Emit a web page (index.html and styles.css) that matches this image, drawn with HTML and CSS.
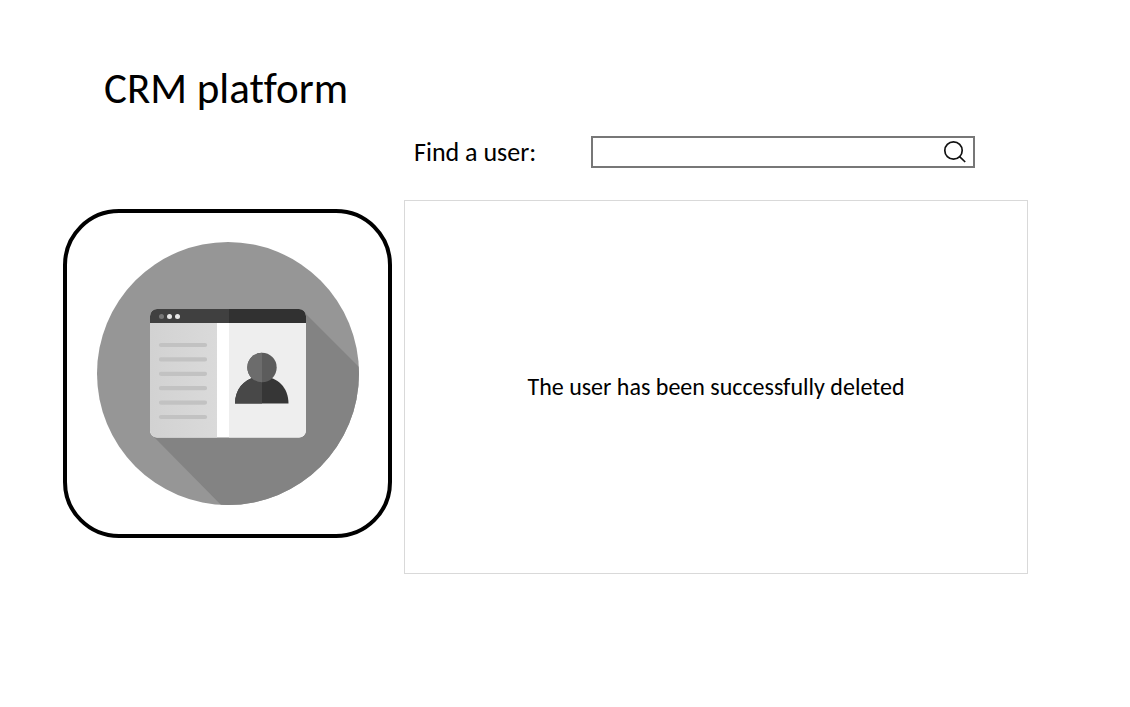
FILE: index.html
```html
<!DOCTYPE html>
<html lang="en">
<head>
  <meta charset="utf-8">
  <title>CRM platform</title>
  <link rel="stylesheet" href="styles.css">
</head>
<body>
  <header class="header">
    <h1 class="title">CRM platform</h1>
  </header>
  <main class="layout">
    <form class="search" role="search">
      <label class="search-label" for="user-search">Find a user:</label>
      <div class="search-field">
        <input class="search-input" id="user-search" type="text">
        <button class="search-button" type="button" aria-label="Search">
          <svg width="24" height="24" viewBox="0 0 24 24" fill="none" stroke="#111" stroke-width="1.7">
            <circle cx="11.500" cy="10.500" r="8.700"/>
            <path d="M17.600 16.600 23.200 22"/>
          </svg>
        </button>
      </div>
    </form>
    <div class="logo-card">
      <svg class="logo" viewBox="0 0 262 263" aria-hidden="true">
        <defs>
          <clipPath id="disc"><ellipse cx="131" cy="131.500" rx="131" ry="131.500"/></clipPath>
          <clipPath id="window"><rect x="53" y="67" width="156" height="128.500" rx="7"/></clipPath>
          <clipPath id="left"><path d="M0 0H165V263H0z"/></clipPath>
          <linearGradient id="page"><stop stop-color="#d2d2d2"/><stop offset="1" stop-color="#dadada"/></linearGradient>
        </defs>
        <g clip-path="url(#disc)">
          <path fill="#969696" d="M0 0H262V263H0z"/>
          <path fill="#838383" d="M206 69 270 133V270H131L55 193z"/>
        </g>
        <g clip-path="url(#window)">
          <path fill="#fff" d="M53 67H209V196H53z"/>
          <path fill="url(#page)" d="M53 81H120V196H53z"/>
          <path fill="#eee" d="M132 81H209V196H132z"/>
          <path fill="#404040" d="M53 67H132V81H53z"/>
          <path fill="#313131" d="M132 67H209V81H132z"/>
        </g>
        <circle cx="64.500" cy="74.500" r="2.500" fill="#777"/>
        <circle cx="72.500" cy="74.500" r="2.500" fill="#e8e8e8"/>
        <circle cx="80.500" cy="74.500" r="2.500" fill="#e8e8e8"/>
        <path stroke="#c2c2c2" stroke-width="4.200" stroke-linecap="round" d="M64 103H108M64 117.400H108M64 131.800H108M64 146.200H108M64 160.600H108M64 175H108"/>
        <path fill="#363636" d="M138 161.500C138 146 149 134.500 165 134.500S191.500 146 191.500 161.500z"/>
        <path fill="#484848" clip-path="url(#left)" d="M138 161.500C138 146 149 134.500 165 134.500S191.500 146 191.500 161.500z"/>
        <circle cx="165" cy="125.500" r="14.700" fill="#5c5c5c"/>
        <circle cx="165" cy="125.500" r="14.700" fill="#6c6c6c" clip-path="url(#left)"/>
      </svg>
    </div>
    <section class="panel">
      <p class="message" role="status">The user has been successfully deleted</p>
    </section>
  </main>
</body>
</html>
```
FILE: styles.css
```css
* {
  box-sizing: border-box;
}

body {
  margin: 0;
  background: #fff;
  color: #000;
  font-family: Carlito, Calibri, "Noto Sans", sans-serif;
  font-variant-ligatures: none;
}

.header {
  padding: 62px 104px 0;
}

.title {
  margin: 0;
  font-size: 43px;
  font-weight: 400;
  line-height: 54px;
}

.layout {
  display: grid;
  grid-template-columns: 329px 1fr;
  column-gap: 12px;
  padding: 20px 102px 0 63px;
}

.search {
  grid-column: 2;
  display: flex;
  align-items: center;
  justify-content: space-between;
  padding: 0 53px 0 10px;
  margin-bottom: 32px;
}

.search-label {
  font-size: 26px;
  line-height: 30px;
}

.search-field {
  display: flex;
  align-items: center;
  width: 384px;
  height: 32px;
  border: 2px solid #777;
}

.search-input {
  flex: 1;
  min-width: 0;
  height: 100%;
  padding: 0 8px;
  border: 0;
  outline: 0;
  background: transparent;
  font: inherit;
  font-size: 20px;
}

.search-button {
  display: flex;
  margin-right: 7px;
  padding: 0;
  border: 0;
  background: transparent;
}

.logo-card {
  display: flex;
  align-items: center;
  justify-content: center;
  align-self: start;
  aspect-ratio: 1;
  margin-top: 9px;
  border: 4px solid #000;
  border-radius: 56px;
}

.logo {
  width: 262px;
}

.panel {
  display: flex;
  align-items: center;
  justify-content: center;
  min-height: 374px;
  border: 1px solid #d9d9d9;
}

.message {
  margin: 0;
  font-size: 24px;
  line-height: 28px;
}
```
